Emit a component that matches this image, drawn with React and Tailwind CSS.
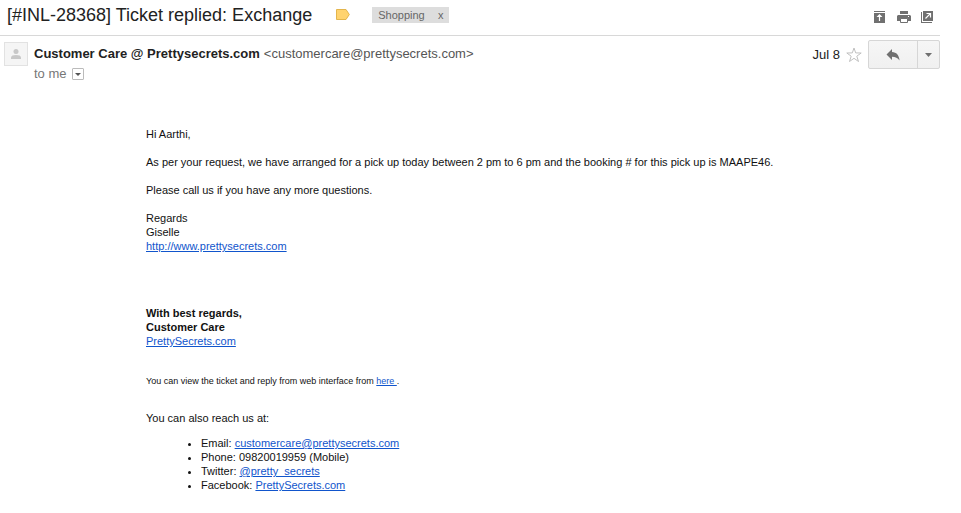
import React from "react";

const linkClass = "text-[#1155cc] underline underline-offset-1";

function Toolbar() {
  return (
    <div className="ml-auto flex items-center gap-2 pr-1 pt-1.5 text-[#707070]">
      <button type="button" aria-label="Archive thread" className="flex h-4 w-4 justify-center">
        <svg width="12" height="14" viewBox="0 0 12 14">
          <path d="M0 1h11v1H0zM0 3h11v10H0z" fill="currentColor" />
          <path d="M5.5 4 8.500 7H6.100V11H4.900V7H2.500z" fill="#fff" />
        </svg>
      </button>
      <button type="button" aria-label="Print all" className="flex h-4 w-4 justify-center">
        <svg width="14" height="14" viewBox="0 0 14 14">
          <path d="M3 1h8v3H3zM1 5h12l1 1v5h-3V9H3v2H0V6z" fill="currentColor" />
          <path d="M3.5 8.500h7v4h-7z" fill="#fff" stroke="currentColor" />
          <path d="M11 6h1v1h-1z" fill="#fff" />
        </svg>
      </button>
      <button type="button" aria-label="Open in new window" className="flex h-4 w-4 justify-center">
        <svg width="14" height="14" viewBox="0 0 14 14">
          <path d="M0 2h1v10h10v1H0zM2 1h10v10H2z" fill="currentColor" />
          <path d="M4.500 8.500 9.300 3.700M5.500 3.500h4v4" fill="none" stroke="#fff" strokeWidth="1.2" />
        </svg>
      </button>
    </div>
  );
}

function SubjectBar() {
  return (
    <header className="flex h-9 items-center border-b border-[#d8d8d8] pb-1.5 pl-[7px]">
      <h1 className="text-lg leading-6 text-[#222]">[#INL-28368] Ticket replied: Exchange</h1>
      <button type="button" aria-label="Important" className="ml-6">
        <svg width="14" height="11" viewBox="0 0 14 11">
          <path d="M0.5 0.5h9.5l3.3 5-3.3 5H0.5z" fill="#ffd36e" stroke="#e3b54c" />
        </svg>
      </button>
      <div className="ml-[22px] flex h-4 items-center bg-[#ddd] text-[11px] leading-4 text-[#666]">
        <span className="pl-1.5">Shopping</span>
        <button type="button" aria-label="Remove label Shopping" className="ml-2 w-4">x</button>
      </div>
      <Toolbar />
    </header>
  );
}

function SenderRow() {
  return (
    <div className="flex items-start pt-1">
      <div className="ml-1 mt-0.5 flex h-6 w-6 shrink-0 items-center justify-center border border-[#e2e2e2] bg-[#f5f5f5]">
        <svg width="10" height="12" viewBox="0 0 10 12" fill="#c8c8c8">
          <circle cx="5" cy="3.5" r="2.5" />
          <path d="M0 11V9.5C0 7.8 2.2 7 5 7s5 .8 5 2.5V11z" />
        </svg>
      </div>
      <div className="ml-1.5 mt-1 text-[13px] leading-5 text-[#555]">
        <div>
          <span className="font-bold text-[#222]">Customer Care @ Prettysecrets.com</span>
          <span className="ml-1">&lt;customercare@prettysecrets.com&gt;</span>
        </div>
        <div className="flex items-center text-[#777]">
          to me
          <button type="button" aria-label="Show details" className="ml-[5px] flex h-3 w-3 items-center justify-center rounded-[1px] border border-[#bbb]">
            <svg width="6" height="3" viewBox="0 0 6 3"><path d="M0 0h6L3 3z" fill="#555" /></svg>
          </button>
        </div>
      </div>
      <div className="ml-auto flex items-center">
        <time className="text-[13px] leading-5 text-[#222]">Jul 8</time>
        <button type="button" aria-label="Star" className="ml-1.5">
          <svg width="16" height="16" viewBox="0 0 16 16">
            <path d="M8 1 9.7 5.9 15.2 6 10.8 9.2 12.5 14.5 8 11.3 3.5 14.5 5.2 9.2 0.8 6 6.3 5.9z" fill="#fff" stroke="#c0c0c0" />
          </svg>
        </button>
        <div className="ml-1.5 flex h-[29px] w-[72px] rounded-[2px] border border-[#d6d6d6] bg-linear-to-b from-[#f6f6f6] to-[#f0f0f0]">
          <button type="button" aria-label="Reply" className="flex flex-1 items-center justify-center border-r border-[#d6d6d6]">
            <svg width="14" height="12" viewBox="0 0 14 12">
              <path d="M6 0v3C10.500 3.200 13 6 13.500 11.500 11.800 8.900 9.500 7.800 6 7.800V11L0.500 5.500z" fill="#707070" />
            </svg>
          </button>
          <button type="button" aria-label="More" className="flex w-[21px] items-center justify-center">
            <svg width="7" height="4" viewBox="0 0 7 4"><path d="M0 0h7L3.5 4z" fill="#707070" /></svg>
          </button>
        </div>
      </div>
    </div>
  );
}

function Message() {
  return (
    <article className="ml-[146px] pt-[43px] text-[11px] leading-[14px] text-[#111]">
      <p>Hi Aarthi,</p>
      <p className="mt-3.5">
        As per your request, we have arranged for a pick up today between 2 pm to 6 pm and the booking # for this pick up is MAAPE46.
      </p>
      <p className="mt-3.5">Please call us if you have any more questions.</p>
      <p className="mt-3.5">
        Regards<br />
        Giselle<br />
        <a href="#site" className={linkClass}>http://www.prettysecrets.com</a>
      </p>
      <p className="mt-[53px]">
        <strong>With best regards,<br />Customer Care</strong><br />
        <a href="#signature" className={linkClass}>PrettySecrets.com</a>
      </p>
      <p className="mt-[26px] text-[9px]">
        You can view the ticket and reply from web interface from <a href="#ticket" className={linkClass}>here </a>.
      </p>
      <p className="mt-[23px]">You can also reach us at:</p>
      <ul className="mt-[11px] list-disc pl-[55px]">
        <li>Email: <a href="#email" className={linkClass}>customercare@prettysecrets.com</a></li>
        <li>Phone: 09820019959 (Mobile)</li>
        <li>Twitter: <a href="#twitter" className={linkClass}>@pretty_secrets</a></li>
        <li>Facebook: <a href="#facebook" className={linkClass}>PrettySecrets.com</a></li>
      </ul>
    </article>
  );
}

export default function App() {
  return (
    <main className="min-h-screen bg-white pr-[21px] font-['Liberation_Sans',Arial,sans-serif]">
      <SubjectBar />
      <SenderRow />
      <Message />
    </main>
  );
}
